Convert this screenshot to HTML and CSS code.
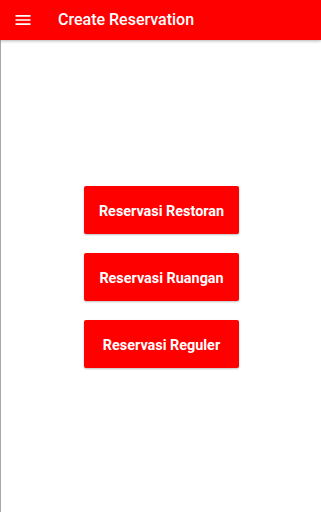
FILE: index.html
```html
<!DOCTYPE html>
<html>
<head>
<meta charset="utf-8">
<link rel="stylesheet" href="styles.css">
</head>
<body>
<div class="app">
  <header class="appbar">
    <svg class="menu" width="20" height="20" viewBox="0 0 24 24"><path fill="#fff" d="M3 18h18v-2H3v2zm0-5h18v-2H3v2zm0-7v2h18V6H3z"/></svg>
    <h1 class="title">Create Reservation</h1>
  </header>
  <main class="content">
    <div class="buttons">
      <button class="btn">Reservasi Restoran</button>
      <button class="btn">Reservasi Ruangan</button>
      <button class="btn">Reservasi Reguler</button>
    </div>
  </main>
</div>
</body>
</html>
```

FILE: styles.css
```css
html, body {
  margin: 0;
  padding: 0;
  height: 100%;
  background: #fff;
}
body {
  font-family: Roboto, "Liberation Sans", sans-serif;
}
.app {
  height: 100%;
  display: flex;
  flex-direction: column;
}
.appbar {
  height: 40px;
  flex: 0 0 40px;
  background: #ff0000;
  display: flex;
  align-items: center;
  box-shadow: 0 1px 3px rgba(0,0,0,0.3);
  position: relative;
  z-index: 1;
}
.menu {
  display: block;
  margin-left: 13px;
  margin-top: -1px;
}
.title {
  margin: 0 0 0 25px;
  color: #fff;
  font-size: 16px;
  font-weight: 500;
  margin-top: -2px;
}
.content {
  flex: 1;
  display: flex;
  align-items: center;
  justify-content: center;
  border-left: 1px solid #a8a8a8;
}
.buttons {
  display: flex;
  flex-direction: column;
  gap: 19px;
  margin-left: 1px;
  margin-top: 2px;
}
.btn {
  width: 155px;
  height: 48px;
  background: #ff0000;
  color: #fff;
  border: none;
  border-radius: 2px;
  font-family: Roboto, "Liberation Sans", sans-serif;
  font-size: 14.4px;
  font-weight: 700;
  box-shadow: 0 1px 2px rgba(0,0,0,0.25);
  padding: 2px 0 0 0;
}
```
